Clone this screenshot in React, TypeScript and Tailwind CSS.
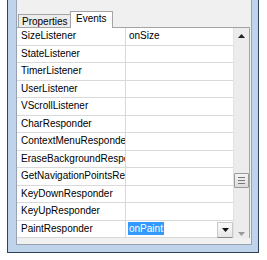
import React from "react";

const rows = [
  "SizeListener",
  "StateListener",
  "TimerListener",
  "UserListener",
  "VScrollListener",
  "CharResponder",
  "ContextMenuResponder",
  "EraseBackgroundResponder",
  "GetNavigationPointsResponder",
  "KeyDownResponder",
  "KeyUpResponder",
  "PaintResponder",
];

export default function App() {
  return (
    <div
      className="w-[267px] h-[260px] bg-white text-[10px] text-[#000]"
      style={{ fontFamily: '"Liberation Sans", Arial, sans-serif' }}
    >
      <div className="ml-[7px] w-[252px] h-[253px] border-l border-r border-b border-[#2f4358] bg-[#bfd4ea] pl-[8px] pr-[6px] pb-[7px]">
        <div className="w-full h-full bg-[#f0f0f0] border-l border-r border-b border-[#97a3b0] flex flex-col">
          {/* tab strip */}
          <div className="h-[27px] flex items-end pl-[1px] shrink-0">
            <div className="h-[13px] w-[52px] border-t border-l border-[#a4a4a4] bg-[#ececec] flex items-center pl-[3px] pt-[1px] leading-none">
              Properties
            </div>
            <div className="h-[17px] w-[43px] border-t border-l border-r border-[#a4a4a4] bg-white flex items-start pt-[2px] pl-[5px] leading-none relative top-[1px] z-10">
              Events
            </div>
          </div>
          {/* table */}
          <div className="w-[233px] border-t border-r border-[#a4a4a4] bg-white flex">
            <div className="w-[216px] flex flex-col">
              {rows.map((r, i) => (
                <div
                  key={r}
                  className="h-[17.5px] flex border-b border-[#d9d9d9] leading-none"
                >
                  <div className="w-[109px] border-r border-[#d9d9d9] pl-[4px] flex items-center overflow-hidden whitespace-nowrap">
                    {r}
                  </div>
                  <div className="w-[107px] flex items-center pl-[3px] whitespace-nowrap relative">
                    {i === 0 && <span>onSize</span>}
                    {i === rows.length - 1 && (
                      <>
                        <span className="bg-[#3399ff] text-white h-[13px] flex items-center px-[1px] -ml-[1px]">
                          onPaint
                        </span>
                        <div className="absolute right-0 top-[1px] w-[16px] h-[16px] border border-[#c9c9c9] border-b-[#8a8a8a] bg-gradient-to-b from-[#fafafa] to-[#e6e6e6] flex items-center justify-center">
                          <svg width="7" height="4" viewBox="0 0 7 4">
                            <path d="M0 0h7L3.5 4z" fill="#111" />
                          </svg>
                        </div>
                      </>
                    )}
                  </div>
                </div>
              ))}
            </div>
            {/* scrollbar */}
            <div className="w-[17px] bg-[#ececec] border-l border-[#e2e2e2] relative">
              <div className="absolute left-[4px] top-[6px]">
                <svg width="7" height="4" viewBox="0 0 7 4">
                  <path d="M0 4h7L3.5 0z" fill="#222" />
                </svg>
              </div>
              <div className="absolute left-0 top-[145px] w-[15px] h-[15px] border border-[#9a9a9a] bg-gradient-to-b from-[#f4f4f4] to-[#dcdcdc] rounded-[1px] flex flex-col items-center justify-center gap-[2px]">
                <div className="w-[7px] h-[1px] bg-[#777]" />
                <div className="w-[7px] h-[1px] bg-[#777]" />
                <div className="w-[7px] h-[1px] bg-[#777]" />
              </div>
              <div className="absolute left-[4px] top-[204px]">
                <svg width="7" height="4" viewBox="0 0 7 4">
                  <path d="M0 0h7L3.5 4z" fill="#9a9a9a" />
                </svg>
              </div>
            </div>
          </div>
        </div>
      </div>
    </div>
  );
}
